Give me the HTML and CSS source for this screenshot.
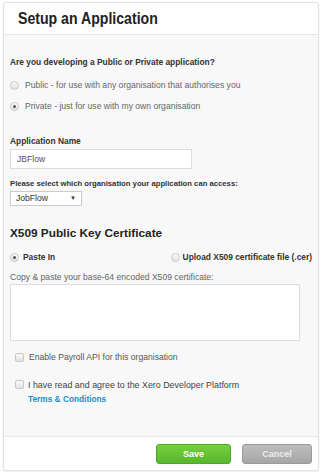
FILE: index.html
```html
<!DOCTYPE html>
<html lang="en">
<head>
  <meta charset="UTF-8">
  <title>Setup an Application</title>
  <link rel="stylesheet" href="styles.css">
</head>
<body>
  <div class="dialog">
    <div class="dialog-header">
      <h1>Setup an Application</h1>
    </div>

    <div class="dialog-body">
      <p class="question">Are you developing a Public or Private application?</p>
      <label class="radio-row first"><span class="radio"></span>Public - for use with any organisation that authorises you</label>
      <label class="radio-row second"><span class="radio checked"></span>Private - just for use with my own organisation</label>

      <p class="field-label name-label">Application Name</p>
      <div class="text-input">JBFlow</div>

      <p class="field-label org-label">Please select which organisation your application can access:</p>
      <div class="select-box">JobFlow <span class="arrow">&#9660;</span></div>

      <h2>X509 Public Key Certificate</h2>
      <div class="cert-options">
        <label class="radio-row strong paste"><span class="radio checked"></span>Paste In</label>
        <label class="radio-row strong upload"><span class="radio"></span>Upload X509 certificate file (.cer)</label>
      </div>
      <p class="hint">Copy &amp; paste your base-64 encoded X509 certificate:</p>
      <div class="textarea"></div>

      <label class="check-row payroll"><span class="checkbox"></span>Enable Payroll API for this organisation</label>
      <label class="check-row terms"><span class="checkbox"></span><span>I have read and agree to the Xero Developer Platform<br><a href="#">Terms &amp; Conditions</a></span></label>
    </div>

    <div class="dialog-footer">
      <button class="btn save">Save</button>
      <button class="btn cancel">Cancel</button>
    </div>
  </div>
</body>
</html>
```

FILE: styles.css
```css
* { box-sizing: border-box; }
body {
  margin: 0;
  padding: 2px 3px;
  font-family: "Liberation Sans", Arial, sans-serif;
  background: #fff;
  color: #444;
}
.dialog {
  width: 316px;
  height: 469px;
  border: 1px solid #e2e2e2;
  border-radius: 3px;
  display: flex;
  flex-direction: column;
  box-shadow: 0 1px 2px rgba(0, 0, 0, 0.08);
}
.dialog-header {
  height: 32px;
  border-bottom: 1px solid #e6e6e6;
  padding: 0 14px;
  display: flex;
  align-items: center;
}
h1 {
  margin: 0;
  font-size: 17px;
  font-weight: 700;
  color: #222;
  transform: scaleX(0.83);
  transform-origin: left center;
}
.dialog-body {
  flex: 1;
  background: #f8f8f8;
  padding: 22px 6px 0;
  font-size: 8.6px;
  line-height: 11px;
}
.question {
  margin: 0;
  font-weight: 700;
  font-size: 8.4px;
  color: #333;
}
.radio-row {
  display: flex;
  align-items: center;
  height: 11px;
  color: #666;
  white-space: nowrap;
}
.radio-row.first { margin-top: 11.5px; }
.radio-row.second { margin-top: 10px; }
.radio {
  width: 9px;
  height: 9px;
  border-radius: 50%;
  border: 1px solid #c8c8c8;
  background: linear-gradient(#fafafa, #e2e2e2);
  margin-right: 6px;
  position: relative;
  flex-shrink: 0;
}
.radio.checked::after {
  content: "";
  position: absolute;
  left: 2px;
  top: 2px;
  width: 3px;
  height: 3px;
  border-radius: 50%;
  background: #555;
}
.field-label {
  margin: 0;
  font-weight: 700;
  font-size: 8.4px;
  color: #333;
}
.name-label { margin-top: 24px; margin-bottom: 2.5px; }
.text-input {
  width: 182px;
  height: 20px;
  border: 1px solid #ddd;
  background: #fff;
  color: #555;
  padding: 4px 6px;
}
.org-label {
  font-size: 7.7px;
  margin-top: 8.5px;
  margin-bottom: 2.5px;
}
.select-box {
  width: 72px;
  height: 15px;
  border: 1px solid #ccc;
  background: #fff;
  color: #333;
  padding: 1px 5px;
  line-height: 11px;
  display: flex;
  justify-content: space-between;
}
.arrow { font-size: 6px; }
h2 {
  margin: 20px 0 0;
  font-size: 11.8px;
  line-height: 14px;
  font-weight: 700;
  color: #222;
}
.cert-options {
  display: flex;
  margin-top: 11.5px;
}
.cert-options .radio-row { font-size: 8.4px; }
.cert-options .paste { width: 161px; }
.cert-options .paste .radio { margin-right: 4px; }
.cert-options .upload .radio { margin-right: 3px; }
.radio-row.strong {
  font-weight: 700;
  color: #333;
}
.hint {
  margin: 9px 0 1.5px;
  color: #666;
}
.textarea {
  width: 290px;
  height: 57px;
  border: 1px solid #ddd;
  background: #fff;
}
.check-row {
  display: flex;
  align-items: flex-start;
  color: #555;
  padding-left: 5px;
}
.checkbox {
  width: 9px;
  height: 9px;
  border: 1px solid #c8c8c8;
  border-radius: 2px;
  background: linear-gradient(#fafafa, #e2e2e2);
  margin-right: 5px;
  margin-top: 1px;
  flex-shrink: 0;
}
.payroll { margin-top: 10.5px; }
.terms {
  margin-top: 15px;
  line-height: 14px;
  font-size: 8.9px;
  color: #444;
}
.terms .checkbox { margin-top: 2.5px; margin-right: 4px; }
.terms a {
  color: #1d8fc4;
  font-weight: 700;
  font-size: 8.3px;
  text-decoration: none;
}
.dialog-footer {
  height: 34px;
  border-top: 1px solid #e6e6e6;
  display: flex;
  justify-content: flex-end;
  align-items: center;
  gap: 11px;
  padding-right: 6px;
}
.btn {
  height: 20px;
  border-radius: 3px;
  font-family: "Liberation Sans", Arial, sans-serif;
  font-size: 9px;
  font-weight: 700;
  color: #fff;
  cursor: pointer;
}
.save {
  width: 75px;
  border: 1px solid #4ea72a;
  background: linear-gradient(#76cf3f, #58b72c);
}
.cancel {
  width: 70px;
  border: 1px solid #9a9a9a;
  background: linear-gradient(#bdbdbd, #a6a6a6);
  color: #eee;
}
```
